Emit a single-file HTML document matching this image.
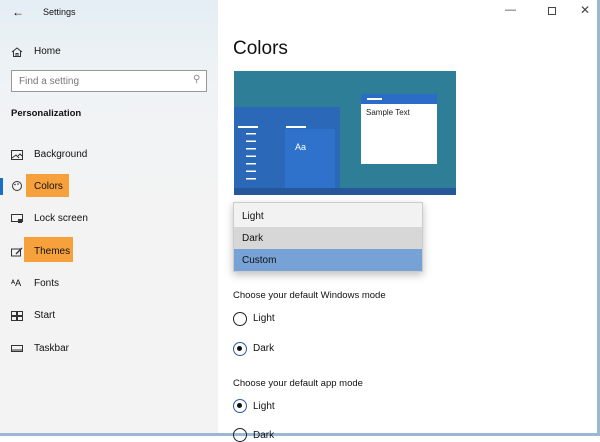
<!DOCTYPE html>
<html><head><meta charset="utf-8"><style>
*{margin:0;padding:0;box-sizing:border-box}
body{width:600px;height:436px;overflow:hidden;background:#fff;font-family:"Liberation Sans",sans-serif;color:#111;position:relative}
.sb{position:absolute;left:0;top:0;width:218px;height:436px;background:linear-gradient(#e4eef4 0,#f0f3f5 90px,#f3f3f3 200px,#f3f3f3)}
.t{position:absolute;font-size:10px;white-space:nowrap}
.nav{position:absolute;left:34px;font-size:10px;margin-top:2px}
.ic{position:absolute;left:11px;width:12px;height:10px;margin-top:2px}
.hl{position:absolute;background:#f7a13c;}
.pv{position:absolute;left:234px;top:71px;width:222px;height:124px;background:#2d7e96}
.r{position:absolute;width:14px;height:14px;border:1.5px solid #222;border-radius:50%;left:233px}
.r.on{border-color:#2a5aa0}
.r.on:after{content:"";position:absolute;left:3px;top:3px;width:5px;height:5px;border-radius:50%;background:#111}
</style></head><body>
<div class="sb"></div>
<div class="t" style="left:12px;top:5px;font-size:12px">&#8592;</div>
<div class="t" style="left:43px;top:7px;font-size:9px">Settings</div>
<svg class="ic" style="top:45px" viewBox="0 0 12 10"><path d="M1 5 L6 1 L11 5 M2.5 4 V9.5 H9.5 V4 M5 9.5 V6.5 H7 V9.5" fill="none" stroke="#333" stroke-width="1"/></svg>
<div class="nav" style="top:44px">Home</div>
<div style="position:absolute;left:11px;top:70px;width:196px;height:22px;border:1.5px solid #999;background:#fff"></div>
<div class="t" style="left:19px;top:76px;color:#777">Find a setting</div>
<div class="t" style="left:193px;top:74px;color:#888">&#9906;</div>
<div class="t" style="left:11px;top:108px;font-weight:bold;font-size:9.5px">Personalization</div>
<svg class="ic" style="top:148px" viewBox="0 0 12 10"><rect x="0.5" y="0.5" width="11" height="9" fill="none" stroke="#333"/><path d="M1 8 L5 5 L8 8 M7 6 L9 4 L11 6" fill="none" stroke="#333"/></svg>
<div class="nav" style="top:147px">Background</div>
<div style="position:absolute;left:0;top:178px;width:3px;height:17px;background:#1a6fc4"></div>
<svg class="ic" style="top:179px" viewBox="0 0 12 10"><circle cx="6" cy="5" r="4.5" fill="none" stroke="#333"/><circle cx="4" cy="3.5" r=".8" fill="#333"/><circle cx="7" cy="3" r=".8" fill="#333"/></svg>
<div class="hl" style="left:26px;top:174px;width:43px;height:23px"></div>
<div class="nav" style="top:179px">Colors</div>
<svg class="ic" style="top:212px" viewBox="0 0 12 10"><rect x="0.5" y="0.5" width="11" height="7" fill="none" stroke="#333"/><rect x="7" y="5" width="4" height="4" fill="#333"/></svg>
<div class="nav" style="top:211px">Lock screen</div>
<svg class="ic" style="top:245px" viewBox="0 0 12 10"><rect x="0.5" y="2" width="9" height="7" fill="none" stroke="#333"/><path d="M5 7 L11 1" stroke="#333" stroke-width="1.3"/></svg>
<div class="hl" style="left:24px;top:237px;width:49px;height:25px"></div>
<div class="nav" style="top:244px">Themes</div>
<div class="t" style="left:11px;top:278px;font-size:9px">ᴬA</div>
<div class="nav" style="top:276px">Fonts</div>
<svg class="ic" style="top:309px" viewBox="0 0 12 10"><rect x="0.5" y="0.5" width="5" height="4" fill="none" stroke="#333"/><rect x="6.5" y="0.5" width="5" height="4" fill="none" stroke="#333"/><rect x="0.5" y="5.5" width="5" height="4" fill="none" stroke="#333"/><rect x="6.5" y="5.5" width="5" height="4" fill="none" stroke="#333"/></svg>
<div class="nav" style="top:308px">Start</div>
<svg class="ic" style="top:342px" viewBox="0 0 12 10"><rect x="0.5" y="1.5" width="11" height="6" fill="none" stroke="#333"/><path d="M1 6 H11" stroke="#333"/></svg>
<div class="nav" style="top:341px">Taskbar</div>

<div class="t" style="left:505px;top:4px;font-size:11px;color:#444">&#8212;</div>
<div style="position:absolute;left:548px;top:7px;width:8px;height:8px;border:1px solid #444"></div>
<div class="t" style="left:580px;top:3px;font-size:12px;color:#444">&#10005;</div>
<div style="position:absolute;right:0;top:0;width:3px;height:436px;background:#9ab8d4"></div>
<div style="position:absolute;left:0;bottom:0;width:600px;height:3px;background:#9ab8d4"></div>

<div class="t" style="left:233px;top:38px;font-size:19px">Colors</div>
<div class="pv">
 <div style="position:absolute;left:0;top:36px;width:106px;height:81px;background:#2b68b8"></div>
 <div style="position:absolute;left:51px;top:58px;width:50px;height:59px;background:#2f72cc"></div>
 <div style="position:absolute;left:0;top:117px;width:222px;height:7px;background:#26579a"></div>
 <div style="position:absolute;left:4px;top:55px;width:20px;height:1.5px;background:#fff"></div>
 <div style="position:absolute;left:52px;top:55px;width:20px;height:1.5px;background:#fff"></div>
 <div style="position:absolute;left:12px;top:62px;width:10px;height:52px;background:repeating-linear-gradient(#fff 0 1.5px,transparent 1.5px 7.5px)"></div>
 <div class="t" style="left:61px;top:71px;color:#fff;font-size:9px">Aa</div>
 <div style="position:absolute;left:127px;top:23px;width:76px;height:70px;background:#fff;border-top:10px solid #2a6cc8"></div>
 <div style="position:absolute;left:133px;top:27px;width:15px;height:1.5px;background:#fff"></div>
 <div class="t" style="left:132px;top:37px;font-size:8px;color:#222">Sample Text</div>
</div>
<div style="position:absolute;left:233px;top:202px;width:190px;height:70px;background:#f2f2f2;border:1px solid #ccc;box-shadow:0 3px 8px rgba(0,0,0,.25)">
 <div style="position:absolute;left:0;top:24px;width:188px;height:22px;background:#d7d7d7"></div>
 <div style="position:absolute;left:0;top:46px;width:188px;height:22px;background:#76a2d6"></div>
 <div class="t" style="left:8px;top:8px">Light</div>
 <div class="t" style="left:8px;top:30px">Dark</div>
 <div class="t" style="left:8px;top:52px">Custom</div>
</div>
<div class="t" style="left:233px;top:290px;font-size:9.5px">Choose your default Windows mode</div>
<div class="r" style="top:312px"></div><div class="t" style="left:253px;top:313px">Light</div>
<div class="r on" style="top:342px"></div><div class="t" style="left:253px;top:343px">Dark</div>
<div class="t" style="left:233px;top:378px;font-size:9.5px">Choose your default app mode</div>
<div class="r on" style="top:399px"></div><div class="t" style="left:253px;top:401px">Light</div>
<div class="r" style="top:428px"></div><div class="t" style="left:253px;top:430px">Dark</div>
</body></html>
